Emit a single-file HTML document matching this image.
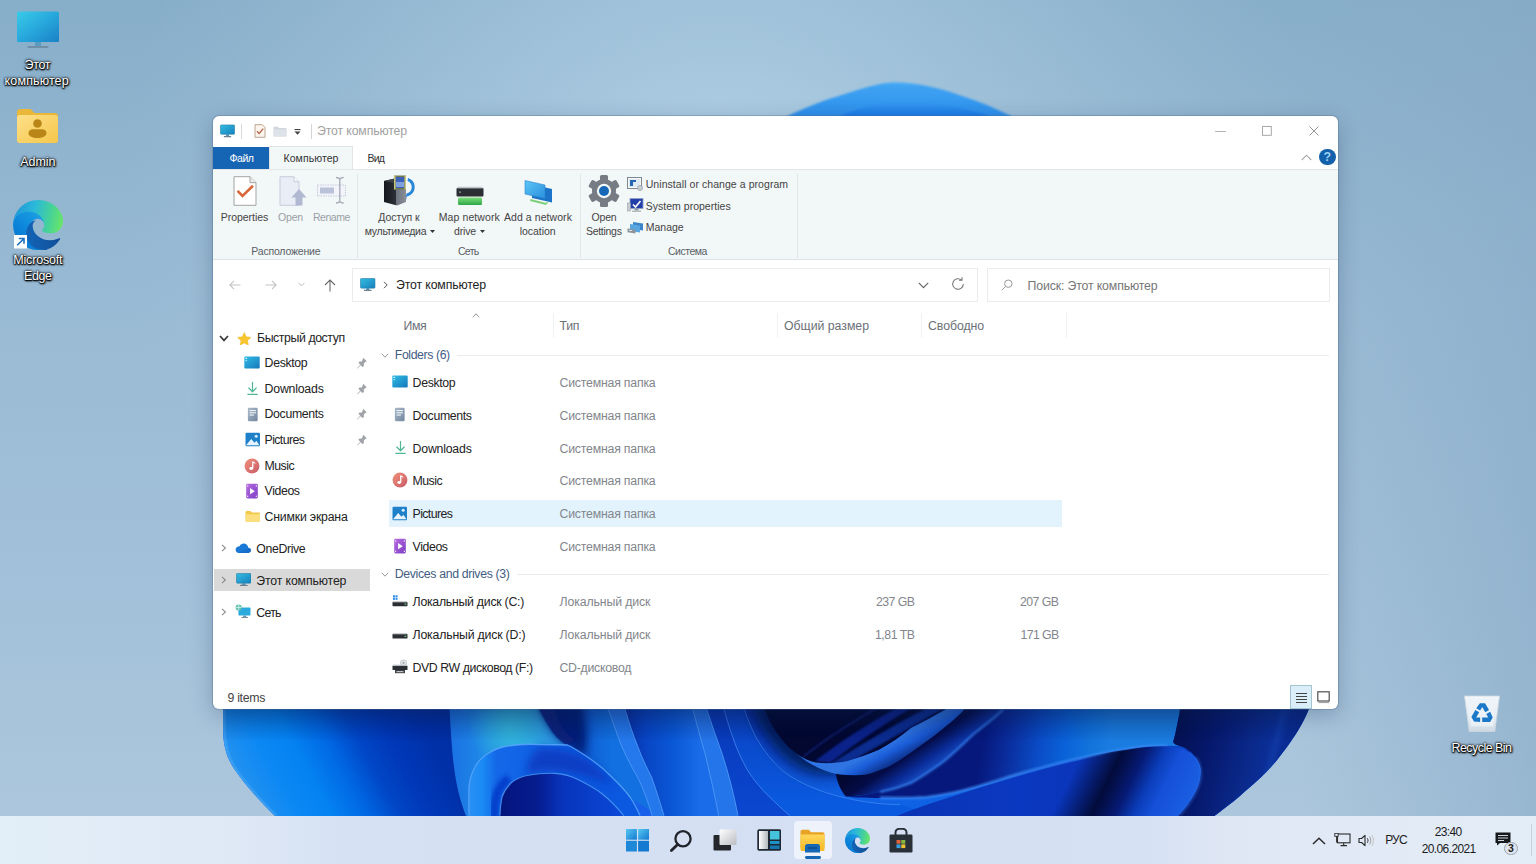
<!DOCTYPE html>
<html lang="ru">
<head>
<meta charset="utf-8">
<title>Этот компьютер</title>
<style>
*{box-sizing:border-box;margin:0;padding:0}
html,body{width:1536px;height:864px;overflow:hidden}
body{position:relative;font-family:"Liberation Sans",sans-serif;font-size:12px;color:#222;background:#9bbad3}
.abs{position:absolute}
#wall{position:absolute;left:0;top:0;width:1536px;height:864px}
/* desktop icons */
.dlabel{position:absolute;color:#fff;font-size:12.5px;line-height:17px;text-align:center;white-space:nowrap;
 text-shadow:0 0 2px #000,0 0 3px #000,1px 1px 2px #000,0 1px 1px rgba(0,0,0,.9)}
/* window */
#win{position:absolute;left:213px;top:116.200px;width:1124.500px;height:593px;background:#fff;border-radius:6px;overflow:hidden;
 box-shadow:0 0 0 1px rgba(80,110,140,.35),0 6px 22px rgba(20,40,80,.28)}
#win .t{position:absolute;white-space:nowrap;line-height:16px}
#ribbon{position:absolute;left:-1px;top:52px;width:1126px;height:91px;background:#f2f7f8;border-top:1px solid #e3e6e9;border-bottom:1px solid #e0e3e6}
.rl{position:absolute;font-size:10.5px;color:#444;white-space:nowrap;line-height:14px;text-align:center}
.rl.dis{color:#9a9fa5}
.rg{position:absolute;font-size:10.5px;color:#5a5f66;white-space:nowrap;line-height:14px;text-align:center}
.rsep{position:absolute;top:4px;width:1px;height:82px;background:#e4e7ea}
.nav{position:absolute;font-size:12.3px;color:#222;white-space:nowrap;line-height:16px}
.nm{position:absolute;font-size:12.3px;color:#222;white-space:nowrap;line-height:16px}
.ty{position:absolute;font-size:12.3px;color:#82868c;white-space:nowrap;line-height:16px}
.hd{position:absolute;font-size:12.3px;color:#6b7077;white-space:nowrap;line-height:16px}
.grp{position:absolute;font-size:12.3px;color:#435d84;white-space:nowrap;line-height:16px}
.csep{position:absolute;top:196px;width:1px;height:25px;background:#f0f1f2}
.gline{position:absolute;height:1px;background:#e9ebee}
/* taskbar */
#task{position:absolute;left:0;top:816px;width:1536px;height:48px;background:linear-gradient(90deg,#e2eef8 0%,#dfe9f6 15%,#d6e1f3 22%,#d4dff3 50%,#d6e1f3 75%,#dfe7f4 80%,#e3edf7 100%)}
.tray{position:absolute;font-size:12px;color:#1c1c1c;white-space:nowrap;line-height:16px}
</style>
</head>
<body>
<svg id="wall" width="1536" height="864" viewBox="0 0 1536 864">
<defs>
<linearGradient id="bg1" x1="0" y1="0" x2="0" y2="1"><stop offset="0" stop-color="#87aec9"/><stop offset="0.35" stop-color="#99bad4"/><stop offset="0.7" stop-color="#a3c1d9"/><stop offset="1" stop-color="#aec8dd"/></linearGradient>
<radialGradient id="bg2" cx="720" cy="200" r="600" gradientUnits="userSpaceOnUse"><stop offset="0" stop-color="#b6d6e8" stop-opacity="0.85"/><stop offset="0.6" stop-color="#a9c8e0" stop-opacity="0.45"/><stop offset="1" stop-color="#a0c0da" stop-opacity="0"/></radialGradient>
<linearGradient id="bgR" x1="1300" y1="0" x2="1536" y2="0" gradientUnits="userSpaceOnUse"><stop offset="0" stop-color="#86a9c6" stop-opacity="0"/><stop offset="1" stop-color="#86a9c6" stop-opacity=".55"/></linearGradient>
<linearGradient id="p1" x1="223" y1="790" x2="460" y2="660" gradientUnits="userSpaceOnUse"><stop offset="0" stop-color="#2a96e8"/><stop offset="0.09" stop-color="#2090f0"/><stop offset="0.2" stop-color="#0c88f4"/><stop offset="0.31" stop-color="#0482f2"/><stop offset="0.43" stop-color="#0066e2"/><stop offset="0.53" stop-color="#0046c6"/><stop offset="0.63" stop-color="#0038b8"/><stop offset="0.76" stop-color="#0030a8"/><stop offset="1" stop-color="#002c9c"/></linearGradient>
<radialGradient id="p2h" cx="510" cy="726" r="42" gradientUnits="userSpaceOnUse"><stop offset="0" stop-color="#34b8dc" stop-opacity="0.85"/><stop offset="1" stop-color="#34b8dc" stop-opacity="0"/></radialGradient>
<linearGradient id="cband" x1="469" y1="0" x2="640" y2="0" gradientUnits="userSpaceOnUse"><stop offset="0" stop-color="#2a90f4"/><stop offset="0.08" stop-color="#1a8af4"/><stop offset="0.16" stop-color="#1468e8"/><stop offset="0.45" stop-color="#1060e4"/><stop offset="0.7" stop-color="#0c56de"/><stop offset="1" stop-color="#0a5ae0"/></linearGradient>
<linearGradient id="cin" x1="500" y1="0" x2="625" y2="0" gradientUnits="userSpaceOnUse"><stop offset="0" stop-color="#04147c"/><stop offset="0.3" stop-color="#061c90"/><stop offset="0.5" stop-color="#0834bc"/><stop offset="1" stop-color="#0a4ad8"/></linearGradient>
<linearGradient id="m23" x1="625" y1="0" x2="700" y2="0" gradientUnits="userSpaceOnUse"><stop offset="0" stop-color="#0830a8"/><stop offset="0.3" stop-color="#0846c6"/><stop offset="0.65" stop-color="#0a58d6"/><stop offset="1" stop-color="#1a6ce8"/></linearGradient>
<linearGradient id="pB" x1="905" y1="738" x2="935" y2="782" gradientUnits="userSpaceOnUse"><stop offset="0" stop-color="#020830"/><stop offset=".3" stop-color="#040c48"/><stop offset=".58" stop-color="#0a2c98"/><stop offset=".84" stop-color="#1a54cc"/><stop offset="1" stop-color="#3a7ce4"/></linearGradient>
<linearGradient id="pC" x1="985" y1="725" x2="1110" y2="745" gradientUnits="userSpaceOnUse"><stop offset="0" stop-color="#06187c"/><stop offset="0.2" stop-color="#0a2c9c"/><stop offset="0.45" stop-color="#0a4cc6"/><stop offset="0.65" stop-color="#0a62d8"/><stop offset="0.85" stop-color="#1274dc"/><stop offset="1" stop-color="#1a7ce0"/></linearGradient>
<linearGradient id="pD" x1="900" y1="0" x2="1160" y2="0" gradientUnits="userSpaceOnUse"><stop offset="0" stop-color="#0a34b4"/><stop offset="0.45" stop-color="#0a38c0"/><stop offset="0.8" stop-color="#0a34b8"/><stop offset="1" stop-color="#0a2ca4"/></linearGradient>
<linearGradient id="lip" x1="1085" y1="748" x2="1190" y2="800" gradientUnits="userSpaceOnUse"><stop offset="0" stop-color="#020830" stop-opacity="0"/><stop offset="0.3" stop-color="#020830" stop-opacity="0.92"/><stop offset="0.48" stop-color="#061a74"/><stop offset="0.62" stop-color="#0a3cb8"/><stop offset="0.75" stop-color="#1550d8"/><stop offset="1" stop-color="#1a5ee2"/></linearGradient>
<linearGradient id="pR" x1="1176" y1="720" x2="1300" y2="752" gradientUnits="userSpaceOnUse"><stop offset="0" stop-color="#041050"/><stop offset="0.3" stop-color="#06186c"/><stop offset="0.6" stop-color="#0a2888"/><stop offset="0.75" stop-color="#0a2e96"/><stop offset="0.8" stop-color="#1038a2"/><stop offset="0.86" stop-color="#0a2c94"/><stop offset="1" stop-color="#0a2a8c"/></linearGradient>
<linearGradient id="bump" x1="0" y1="82" x2="0" y2="120" gradientUnits="userSpaceOnUse"><stop offset="0" stop-color="#52aef6"/><stop offset="0.12" stop-color="#3fa2f2"/><stop offset="0.5" stop-color="#369af0"/><stop offset="1" stop-color="#2a8ae8"/></linearGradient>
<linearGradient id="bump2" x1="0" y1="100" x2="0" y2="120" gradientUnits="userSpaceOnUse"><stop offset="0" stop-color="#3a9ef2"/><stop offset="1" stop-color="#1270e4"/></linearGradient>
<filter id="b1" x="-20%" y="-20%" width="140%" height="140%"><feGaussianBlur stdDeviation=".8"/></filter>
<filter id="b2" x="-20%" y="-20%" width="140%" height="140%"><feGaussianBlur stdDeviation="2"/></filter>
<filter id="b4" x="-30%" y="-30%" width="160%" height="160%"><feGaussianBlur stdDeviation="4"/></filter>
<filter id="b7" x="-40%" y="-40%" width="180%" height="180%"><feGaussianBlur stdDeviation="7"/></filter>
<clipPath id="bloomclip"><path d="M223 600 L223 728 C223 748 228 760 235 770 C242 780 248 787 254 794 C262 803 268 809 275 816 L300 840 L1185 840 L1215 815.600 C1228 806 1238 798 1246 790.600 C1260 779 1270 769 1277.500 759.400 C1286 749 1292 740 1297.800 731 C1302 724 1306 716 1308.750 709.400 L1330 600 Z"/></clipPath>
<linearGradient id="p2g" x1="449" y1="0" x2="548" y2="0" gradientUnits="userSpaceOnUse"><stop offset="0" stop-color="#1a70e4"/><stop offset=".3" stop-color="#1e86e6"/><stop offset=".62" stop-color="#2aa6de"/><stop offset="1" stop-color="#2a96e2"/></linearGradient>
<linearGradient id="mid1" x1="560" y1="0" x2="612" y2="0" gradientUnits="userSpaceOnUse"><stop offset="0" stop-color="#0a4cc6"/><stop offset="1" stop-color="#1270e0"/></linearGradient>
<linearGradient id="v5" x1="0" y1="709" x2="0" y2="805" gradientUnits="userSpaceOnUse"><stop offset="0" stop-color="#0a40c0"/><stop offset="1" stop-color="#0a5ae0"/></linearGradient>
<linearGradient id="v6" x1="0" y1="709" x2="0" y2="800" gradientUnits="userSpaceOnUse"><stop offset="0" stop-color="#0832aa"/><stop offset=".5" stop-color="#0a48cc"/><stop offset="1" stop-color="#1062e4"/></linearGradient>
<linearGradient id="v45" x1="0" y1="709" x2="0" y2="805" gradientUnits="userSpaceOnUse"><stop offset="0" stop-color="#0838b8"/><stop offset="1" stop-color="#0a46ce"/></linearGradient>
<linearGradient id="winsh" x1="0" y1="708" x2="0" y2="742" gradientUnits="userSpaceOnUse"><stop offset="0" stop-color="#001040" stop-opacity=".3"/><stop offset="1" stop-color="#001040" stop-opacity="0"/></linearGradient>
<linearGradient id="pA" x1="880" y1="748" x2="892" y2="770" gradientUnits="userSpaceOnUse"><stop offset="0" stop-color="#2e74e2"/><stop offset=".35" stop-color="#1a5cd8"/><stop offset="1" stop-color="#08206c"/></linearGradient>
</defs>
<rect width="1536" height="864" fill="url(#bg1)"/>
<rect width="1536" height="864" fill="url(#bg2)"/>
<rect width="1536" height="864" fill="url(#bgR)"/>
<!-- top bump -->
<g filter="url(#b1)">
<path d="M784 119 L787.800 116 C795 112.500 803 109 811 105.800 C821 101.500 832 98 842.500 94.800 C853 91.500 863 88 873.750 85.500 C880 84 886 82.500 892.500 82.300 C902 82 911 83 920.600 84.700 C931 86.500 941 89 951.900 92.500 C962 96 973 99.500 983 103.400 C993 107.500 1002 111.500 1011 116 L1015 119Z" fill="url(#bump)"/>
<path d="M834 119 C848 112 861 108 873.750 105 C884 102.700 895 101.700 905 101.900 C921 102.200 937 104 951.900 106.600 C966 109.200 980 112.500 996 119Z" fill="url(#bump2)"/>
</g>
<!-- bloom bottom -->
<g clip-path="url(#bloomclip)">
<rect x="200" y="600" width="1150" height="250" fill="#1860ea"/>
<!-- left petal -->
<rect x="200" y="600" width="272" height="250" fill="url(#p1)"/>
<!-- second petal -->
<path d="M449.500 600 L449.500 709 C451 735 452 750 453.400 762 C456 785 460 800 466 816 L470 840 L600 840 L600 600 Z" fill="url(#p2g)"/>
<rect x="440" y="660" width="140" height="140" fill="url(#p2h)"/>
<!-- medium region right of second petal -->
<path d="M539 600 L539 709 C544 718 548 725 552 731 C557 738 562 742 567.500 745 L600 780 L700 840 L800 840 L800 600 Z" fill="url(#mid1)"/>
<path d="M541 600 L541 709 C546 720 551 729 558 737 C565 744 574 750 584 756 C590 745 586 722 582 700 L582 600Z" fill="#061a74" filter="url(#b4)" opacity=".95"/>
<path d="M539 700 L539 709 C544 718 548 725 552 731 C557 738 562 742 567.500 745 L575 740 C562 730 555 715 552 700Z" fill="#08207c" filter="url(#b1)"/>
<!-- curl outer band -->
<path d="M469 840 L469 815.600 C468.500 800 469 795 469 786 C470 778 472 772 475 767 C479 760 483 756 489 753 C495 749 501 747 508 746 C520 744 530 744 539 744.500 C550 744.600 560 744.700 567.500 745 C574 748 580 752 586 756 C595 762 603 768 609.700 775 C617 782 624 789 630 797 C634 803 637 809 640 815.600 L650 840 Z" fill="url(#cband)"/>
<path d="M540 748 C560 748 575 752 590 762 C600 770 608 778 614 786 C600 780 585 774 565 772 C550 770 535 772 525 775 C528 762 532 752 540 748Z" fill="#0830b8" filter="url(#b4)" opacity=".7"/>
<path d="M469 815.600 C468.500 800 469 795 469 786 C470 778 472 772 475 767 C479 760 483 756 489 753 C495 749 501 747 508 746 C520 744 530 744 539 744.500 C550 744.600 560 744.700 567.500 745 C574 748 580 752 586 756 C595 762 603 768 609.700 775 C617 782 624 789 630 797 C634 803 637 809 640 815.600" stroke="#58a6fa" stroke-width="1.300" fill="none" opacity=".85"/>
<path d="M494 840 L494 815 C494 806 495 800 497 794 C500 787 504 782 509 778" stroke="#0036c4" stroke-width="9" fill="none" filter="url(#b2)" opacity=".8"/>
<!-- curl inner -->
<path d="M500 840 L500 815.600 C500 808 501 802 502 797 C504 791 507 787 511 783 C517 778 523 776 530 775 C538 773.500 547 773 555 773.400 C563 774 571 776 578.400 779.700 C587 784 595 788 602 793.700 C610 800 617 807 623.700 815.600 L640 840 Z" fill="url(#cin)"/>
<path d="M500 815.600 C500 808 501 802 502 797 C504 791 507 787 511 783 C517 778 523 776 530 775 C538 773.500 547 773 555 773.400 C563 774 571 776 578.400 779.700 C587 784 595 788 602 793.700 C610 800 617 807 623.700 815.600" stroke="#4f9ef8" stroke-width="1.200" fill="none" opacity=".8"/>
<!-- thin petals -->
<path d="M625 600 L625 709 C629 722 633 735 638 747 C642 758 647 768 652 778 C656 790 660 802 664 815.600 L668 840 L760 840 L700 600Z" fill="url(#m23)"/>
<path d="M608 600 L608 709 C613 722 617 735 622 747 C627 758 632 768 638 778 C644 790 648 802 652 815.600 L655 840 L668 840 L664 815.600 C660 802 656 790 652 778 C647 768 642 758 638 747 C633 735 629 722 625 709 L625 600Z" fill="#2478ec"/>
<path d="M608 709 C613 722 617 735 622 747 C627 758 632 768 638 778 C644 790 648 802 652 815.600M625 709 C629 722 633 735 638 747 C642 758 647 768 652 778 C656 790 660 802 664 815.600" stroke="#5aa4fa" stroke-width="1" fill="none" opacity=".7"/>
<!-- band 3-4 and 4-5 -->
<path d="M706.900 600 L706.900 709.400 C712 725 717 740 722.500 754.700 C729 775 734 795 738 815.600 L742 840 L830 840 L760 600Z" fill="url(#v45)"/>
<path d="M692.800 600 L692.800 709.400 C697 725 701 740 705.300 754.700 C710 775 715 795 718.600 815.600 L722 840 L742 840 L738 815.600 C734 795 729 775 722.500 754.700 C717 740 712 725 706.900 709.400 L706.900 600Z" fill="#2474ea"/>
<path d="M692.800 709.400 C697 725 701 740 705.300 754.700 C710 775 715 795 718.600 815.600M706.900 709.400 C712 725 717 740 722.500 754.700 C729 775 734 795 738 815.600" stroke="#5aa4fa" stroke-width="1" fill="none" opacity=".7"/>
<!-- right of line 5 -->
<path d="M724 600 L724 709.400 C727 720 730 730 733.400 739 C737 750 742 760 747.500 770.300 C754 780 761 789 769.400 796.900 C776 803 782 809 789.700 815.600 L820 840 L1000 840 L1000 600Z" fill="url(#v5)"/>
<path d="M724 709.400 C727 720 730 730 733.400 739 C737 750 742 760 747.500 770.300 C754 780 761 789 769.400 796.900 C776 803 782 809 789.700 815.600" stroke="#4a92f6" stroke-width="1" fill="none" opacity=".7"/>
<!-- right of line 6 -->
<path d="M744.400 600 L744.400 709.400 C748 720 752 730 756.900 739 C764 751 772 761 781.900 770.300 C792 778 803 784 816 789 C828 794 841 797 855 800 C870 803 885 804.500 900 804.700 L960 820 L1000 840 L1250 840 L1250 600Z" fill="url(#v6)"/>
<path d="M744.400 709.400 C748 720 752 730 756.900 739 C764 751 772 761 781.900 770.300 C792 778 803 784 816 789 C828 794 841 797 855 800 C870 803 885 804.500 900 804.700" stroke="#4a92f6" stroke-width="1" fill="none" opacity=".6"/>
<path d="M764.700 700 L764.700 709.400 C768 717 771 724 775.600 731 C781 739 787 746 794 751.600 C801 757 808 761 816 762.500 C826 764 837 763 847.500 761" stroke="#020830" stroke-width="22" fill="none" filter="url(#b7)" opacity=".75"/>
<!-- cavity -->
<path d="M764.700 600 L764.700 709.400 C768 717 771 724 775.600 731 C781 739 787 746 794 751.600 C801 757 808 761 816 762.500 C826 764 837 763 847.500 761 C858 758 869 754 878.800 750 C890 744 900 737 911 728 C923 722 934 716 945.600 709.400 L960 600Z" fill="#020830"/>
<g opacity=".9" filter="url(#b1)">
<path d="M803 757 C830 735 860 718 890 700" stroke="#1a2a86" stroke-width="1.500" fill="none"/>
<path d="M815 761 C845 738 880 716 912 700 L925 700 C890 720 860 740 830 763Z" fill="#0d2896"/>
<path d="M832 763 C865 742 905 718 940 702 L958 700 C920 722 880 745 850 762Z" fill="#11319c"/>
</g>
<!-- petal B (shadowed, under cavity rim) -->
<path d="M835 768 C846 768 858 765 869 761 C880 757 890 751 900 744 C915 735 930 725 945.600 715 L952 700 L1003.400 700 L1003.400 709.400 C994 718 984 726 973.750 734 C963 744 953 754 942.500 762.500 C932 770 922 777 911 783 C901 787 891 790 880 792 C868 794.500 856 796 846 796.500 C840 790 836 780 835 768Z" fill="url(#pB)"/>
<!-- petal A rim -->
<path d="M796 753.500 C802 758 809 761.500 816 762.500 C826 764 837 763 847.500 761 C858 758 869 754 878.800 750 C890 744 900 737 911 728 C923 722 934 716 945.600 709.400 L950 700 L972 700 L962 712 C956 718 950 723 945 727 C937 734 928 740 920 746 C913 751 906 756 900 760 C893 764.500 887 768 880 770 C873 773 866 775 860 775 C850 775.500 840 775 832 773 C818 769 806 762 796 753.500Z" fill="url(#pA)"/>
<!-- broad surface C -->
<path d="M1003.400 600 L1003.400 709.400 C994 718 984 726 973.750 734 C963 744 953 754 942.500 762.500 C932 770 922 777 911 783 C901 787 891 790 880 792 C868 794.500 856 796 846 796.500 C858 797.800 869 798 880 797.900 C896 798 912 798 927 797 C943 795 958 792 973.750 787.500 C990 783 1005 778 1020.600 773.400 C1036 769 1052 765 1067.500 761 C1085 757 1103 753 1120 750 C1136 747 1152 745.500 1168 745.700 L1180 746 C1176 745 1174 744 1173 742 C1175 736 1176 730 1177.500 723 C1178.500 718 1179.500 714 1180 709 L1180 600Z" fill="url(#pC)"/>
<path d="M880 797.700 C896 798 912 798 927 797 C943 795 958 792 973.750 787.500 C990 783 1005 778 1020.600 773.400 C1036 769 1052 765 1067.500 761 C1085 757 1103 753 1120 750 C1136 747 1152 745.500 1168 745.700" stroke="#3f8ef6" stroke-width="2.200" fill="none" opacity=".9" filter="url(#b1)"/>
<path d="M1003.400 709.400 C994 718 984 726 973.750 734 C963 744 953 754 942.500 762.500 C932 770 922 777 911 783 C901 787 891 790 880 792" stroke="#3a8af4" stroke-width="2" fill="none" opacity=".8" filter="url(#b1)"/>
<!-- underside D -->
<path d="M892 818 C905 812 920 807 935 802 C948 798 961 793.500 974 789.500 C990 784.500 1005 780 1020.600 775.400 C1036 771 1052 767 1067.500 763 C1085 759 1103 755 1120 752 C1136 749 1152 747.500 1168 747.700 L1190 750 L1185 840 L880 840Z" fill="url(#pD)"/>
<!-- lip of C -->
<path d="M1040 769 C1070 761 1100 753 1129 749.400 C1141 747.500 1153 746.300 1165 746.300 C1172 746.500 1178 747 1183.750 749 C1189 751.500 1193 754 1196 758 C1199 762 1200.500 766 1201 770 C1201 776 1200 782 1197.800 787.500 C1195 794 1191 800 1187 806 C1184 810 1181 813 1179 815.600 L1165 840 L1000 840Z" fill="url(#lip)"/>
<!-- far right petal -->
<path d="M1180 600 L1180 709 C1179.500 714 1178.500 718 1177.500 723 C1176 730 1175 736 1173 742 C1174 744 1176 745 1180 746 C1186 748 1192 752 1196 757.800 C1199 762 1200.500 766 1201 770 C1201 776 1200 782 1197.800 787.500 C1195 794 1191 800 1187 806 C1184 810 1181 813 1179 815.600 L1165 840 L1340 840 L1340 600Z" fill="url(#pR)"/>
<path d="M1196 757 C1200 763 1202 770 1201 778 C1199 790 1192 802 1180 815.600" stroke="#3a7cf0" stroke-width="1.500" fill="none" opacity=".6" filter="url(#b1)"/>
<path d="M224 700 L224 728 C224 748 229 760 236 770 C243 780 249 787 255 794 C263 803 269 809 276 816" stroke="#62b4f4" stroke-width="2" fill="none" opacity=".7" filter="url(#b1)"/>
<rect x="200" y="708" width="1150" height="40" fill="url(#winsh)"/>
</g>
</svg>

<svg class="abs" style="left:15.5px;top:11.0px;" width="44" height="38" viewBox="0 0 44 38"><defs><linearGradient id="dm" x1="0" y1="0" x2="1" y2="1"><stop offset="0" stop-color="#3acbe8"/><stop offset=".5" stop-color="#27a8dc"/><stop offset="1" stop-color="#1a80c6"/></linearGradient></defs>
<rect x="1" y=".5" width="42" height="30.500" rx="1.500" fill="url(#dm)"/><rect x="19" y="31" width="6" height="4" fill="#5a9cc0"/><rect x="11.500" y="35" width="21" height="2" rx="1" fill="#6f8fa6"/></svg>
<div class="dlabel" style="left:-22.7px;width:120px;top:56.8px;letter-spacing:-0.396px;">Этот</div>
<div class="dlabel" style="left:-23.3px;width:120px;top:72.5px;letter-spacing:0.130px;">компьютер</div>
<svg class="abs" style="left:16.0px;top:108.0px;" width="43" height="36" viewBox="0 0 43 36"><defs><linearGradient id="df" x1="0" y1="0" x2="1" y2="1"><stop offset="0" stop-color="#fde08a"/><stop offset="1" stop-color="#f5c64a"/></linearGradient></defs>
<path d="M1 4c0-1.700 1.300-3 3-3h10.500l4 4H39c1.700 0 3 1.300 3 3v24c0 1.700-1.300 3-3 3H4c-1.700 0-3-1.300-3-3z" fill="#e9b73a"/><path d="M1 10c0-1.700 1.300-3 3-3h35c1.700 0 3 1.300 3 3v22c0 1.700-1.300 3-3 3H4c-1.700 0-3-1.300-3-3z" fill="url(#df)"/><circle cx="21.500" cy="15.500" r="4.300" fill="#bb8618"/><path d="M12.500 25c0-2.500 2-3.800 4.500-3.800h9c2.500 0 4.500 1.300 4.500 3.800 0 3.300-4 5-9 5s-9-1.700-9-5z" fill="#bb8618"/></svg>
<div class="dlabel" style="left:-22.2px;width:120px;top:153.8px;letter-spacing:-0.087px;">Admin</div>
<svg class="abs" style="left:12.5px;top:200.3px;" width="50" height="50" viewBox="0 0 256 256"><defs>
<linearGradient id="ea_d" x1="63.300" y1="182" x2="241.700" y2="182" gradientUnits="userSpaceOnUse"><stop offset="0" stop-color="#1265b8"/><stop offset="1" stop-color="#114f98"/></linearGradient>
<linearGradient id="ec_d" x1="157.300" y1="104.600" x2="46" y2="225.900" gradientUnits="userSpaceOnUse"><stop offset="0" stop-color="#1b9de2"/><stop offset=".2" stop-color="#1595df"/><stop offset=".7" stop-color="#0a82d8"/><stop offset="1" stop-color="#077ad4"/></linearGradient>
<linearGradient id="ee_d" x1="0" y1="60" x2="256" y2="110" gradientUnits="userSpaceOnUse"><stop offset="0" stop-color="#1e93d8"/><stop offset=".4" stop-color="#2bb9da"/><stop offset=".72" stop-color="#45d19a"/><stop offset="1" stop-color="#6ae665"/></linearGradient>
</defs>
<path fill="url(#ea_d)" d="M235.700 195.500a93.700 93.700 0 0 1-10.600 4.700 101.900 101.900 0 0 1-35.900 6.400c-47.300 0-88.500-32.500-88.500-74.300a31.500 31.500 0 0 1 16.400-27.300c-42.800 1.800-53.800 46.400-53.800 72.500 0 73.900 68.100 81.400 82.800 81.400 7.900 0 19.800-2.300 27-4.600l1.300-.4a128.300 128.300 0 0 0 66.600-52.800 4 4 0 0 0-5.300-5.600z"/>
<path fill="url(#ec_d)" d="M105.700 241.400a79.200 79.200 0 0 1-22.700-21.300 80.700 80.700 0 0 1 29.500-120c3.200-1.500 8.500-4.100 15.600-4a32.400 32.400 0 0 1 25.700 13 31.900 31.900 0 0 1 6.300 18.700c0-.2 24.500-79.600-80-79.600-43.900 0-80 41.600-80 78.200a130.200 130.200 0 0 0 12.100 56 128 128 0 0 0 156.400 67.100 75.500 75.500 0 0 1-62.800-8z"/>
<path fill="url(#ee_d)" d="M152.300 148.900c-.8 1-3.300 2.500-3.300 5.600 0 2.600 1.700 5.200 4.800 7.300 14.300 10 41.400 8.600 41.500 8.600a59.600 59.600 0 0 0 30.300-8.300 61.400 61.400 0 0 0 30.400-52.900c.3-22.400-8-37.300-11.300-43.900C223.500 23.900 178.100 0 128 0A128 128 0 0 0 0 126.200c.5-36.500 36.800-66 80-66 3.500 0 23.500.3 42 10 16.300 8.600 24.900 19 30.800 29.200 6.200 10.700 7.300 24.100 7.300 29.500s-2.700 13.300-7.800 20z"/></svg>
<svg class="abs" style="left:13.8px;top:235.2px;" width="13.5" height="13.5" viewBox="0 0 13.5 13.5"><rect width="13.500" height="13.500" fill="#fff"/><path d="M3.200 10.300L9.800 3.700M4.800 3.500h5.200v5.200" stroke="#1c6fc0" stroke-width="1.600" fill="none"/></svg>
<div class="dlabel" style="left:-22.2px;width:120px;top:251.5px;letter-spacing:-0.189px;">Microsoft</div>
<div class="dlabel" style="left:-22.2px;width:120px;top:268.1px;letter-spacing:-0.451px;">Edge</div>
<svg class="abs" style="left:1462.5px;top:694.5px;" width="38" height="38" viewBox="0 0 38 38"><defs><linearGradient id="rb" x1="0" y1="0" x2="0" y2="1"><stop offset="0" stop-color="#f3f7fa"/><stop offset=".7" stop-color="#e2eaf1"/><stop offset="1" stop-color="#ccd8e3"/></linearGradient></defs>
<path d="M1.500 1h35l-4.700 35.500H6.200z" fill="url(#rb)" stroke="#cdd8e2" stroke-width=".8"/><path d="M4.200 3.200h29.600l-3.800 28H8z" fill="#edf3f8" opacity=".75"/>
<g transform="translate(19.200 19) scale(1.140)" fill="#1b78c8"><path d="M-2-9.500l4.500 0 3.500 6-3.300 2-2.700-4.600-1.800 3-3.400-2z"/><path d="M-2-9.500l4.500 0 3.500 6-3.300 2-2.700-4.600-1.800 3-3.400-2z" transform="rotate(120)"/><path d="M-2-9.500l4.500 0 3.500 6-3.300 2-2.700-4.600-1.800 3-3.400-2z" transform="rotate(240)"/></g></svg>
<div class="dlabel" style="left:1421.5px;width:120px;top:739.7px;letter-spacing:-0.545px;">Recycle Bin</div>

<div id="win"><div style="position:absolute;left:1px;top:.8px;width:1124px;height:591px">
<svg class="abs" style="left:6.3px;top:7.0px;" width="15" height="14" viewBox="0 0 16 14"><defs><linearGradient id="gmon_1" x1="0" y1="0" x2="1" y2="1"><stop offset="0" stop-color="#34bde0"/><stop offset="1" stop-color="#1680be"/></linearGradient></defs>
<rect x=".5" y=".5" width="15" height="10" rx=".8" fill="url(#gmon_1)" stroke="#1c7aa6" stroke-width=".6"/><rect x="6.5" y="10.5" width="3" height="2" fill="#4b8fb5"/><rect x="4" y="12.3" width="8" height="1.3" rx=".5" fill="#6b7f8c"/></svg>
<div class="abs" style="left:27px;top:7px;width:1px;height:15px;background:#d9d9d9"></div>
<svg class="abs" style="left:39.6px;top:7.5px;" width="12" height="14" viewBox="0 0 12 14"><path d="M1 .7h7.300l2.700 2.700V13.300H1z" fill="#fdf5ee" stroke="#b39c88" stroke-width=".9"/><path d="M3 7.200l2.200 2.300L9.200 4.600" stroke="#b4684a" stroke-width="1.300" fill="none"/></svg>
<svg class="abs" style="left:59.0px;top:9.5px;" width="14" height="11" viewBox="0 0 14 11"><path d="M.5 1.700c0-.6.4-1 1-1h3.400l1.300 1.300h6.300c.6 0 1 .4 1 1v6.500c0 .6-.4 1-1 1h-11c-.6 0-1-.4-1-1z" fill="#cfd6dd"/><path d="M.5 3.600h13v5.900c0 .6-.4 1-1 1h-11c-.6 0-1-.4-1-1z" fill="#dde3e9"/></svg>
<svg class="abs" style="left:79.5px;top:12.5px;" width="7" height="6" viewBox="0 0 7 6"><rect x=".5" y="0" width="6" height="1.100" fill="#444"/><path d="M.5 2.500h6l-3 3.200z" fill="#444"/></svg>
<div class="abs" style="left:96.500px;top:7px;width:1px;height:15px;background:#d4d4d4"></div>
<div class="t" style="left:103.0px;top:6.0px;font-size:12.300px;color:#a2a2a2;letter-spacing:-0.140px;">Этот компьютер</div>
<svg class="abs" style="left:1001.0px;top:13.0px;" width="12" height="3" viewBox="0 0 12 3"><rect x="0" y="1" width="11" height="1" fill="#b5b5b5"/></svg>
<svg class="abs" style="left:1048.3px;top:9.2px;" width="10" height="10" viewBox="0 0 10 10"><rect x=".5" y=".5" width="8.800" height="8.800" fill="none" stroke="#a8a8a8" stroke-width="1"/></svg>
<svg class="abs" style="left:1095.3px;top:9.2px;" width="10" height="10" viewBox="0 0 10 10"><path d="M.5.500l9 9M9.500.500l-9 9" stroke="#979797" stroke-width="1"/></svg>
<div class="abs" style="left:-1px;top:30px;width:56px;height:22px;background:#1565b4"></div>
<div class="t" style="left:-72.5px;width:200px;text-align:center;top:33.0px;font-size:10.500px;color:#fff;letter-spacing:-0.457px;">Файл</div>
<div class="abs" style="left:55px;top:29.500px;width:84px;height:23.500px;background:#f2f7f8;border:1px solid #e2e5e8;border-bottom:none"></div>
<div class="t" style="left:-3.0px;width:200px;text-align:center;top:33.0px;font-size:10.500px;color:#333;letter-spacing:0.071px;">Компьютер</div>
<div class="t" style="left:61.8px;width:200px;text-align:center;top:33.0px;font-size:10.500px;color:#333;letter-spacing:-0.800px;">Вид</div>
<svg class="abs" style="left:1086.5px;top:37.5px;" width="11" height="7" viewBox="0 0 11 7"><path d="M.8 6l4.700-4.800L10.200 6" stroke="#a9a9a9" stroke-width="1.100" fill="none"/></svg>
<div class="abs" style="left:1105px;top:32px;width:16.500px;height:16.500px;border-radius:50%;background:#1460aa"></div>
<div class="t" style="left:1013.3px;width:200px;text-align:center;top:32.5px;font-size:12.500px;font-weight:bold;color:#9ad2f7;">?</div>
<div id="ribbon">
</div>
<svg class="abs" style="left:18.5px;top:59.5px;" width="24" height="30" viewBox="0 0 24 30"><path d="M1 .7h16l6 6V29.300H1z" fill="#fff" stroke="#a3a3a3" stroke-width="1"/><path d="M17 .7v6h6" fill="#ececec" stroke="#a3a3a3" stroke-width="1"/><path d="M4.500 14.800l5 5.200L20 9.800" stroke="#d9673a" stroke-width="2.600" fill="none"/></svg>
<svg class="abs" style="left:65.0px;top:59.5px;opacity:.9;" width="28" height="30" viewBox="0 0 28 30"><path d="M1 .7h14l5 5V29.300H1z" fill="#e9ecf6" stroke="#c3c9dc" stroke-width="1"/><path d="M15 .7v5h5" fill="#f6f7fb" stroke="#c3c9dc" stroke-width="1"/><path d="M20 13l7.500 8.500h-4V29.500h-7v-8h-4z" fill="#a9b3cd"/></svg>
<svg class="abs" style="left:103.0px;top:59.5px;" width="30" height="28" viewBox="0 0 30 28"><rect x=".5" y="9" width="28" height="11" fill="#f2f4fa" stroke="#c5cbdc" stroke-width="1" stroke-dasharray="1.500 1"/><rect x="3" y="11.500" width="14" height="6" fill="#b9c2d8"/><path d="M19 1.500c2 0 3 .5 3.800 1.500C23.600 2 24.600 1.500 26.600 1.500M19 27c2 0 3-.5 3.800-1.500.8 1 1.800 1.500 3.800 1.500M22.800 3v22.500" stroke="#a5a9b5" stroke-width="1.300" fill="none"/></svg>
<svg class="abs" style="left:169.0px;top:58.5px;" width="33" height="31" viewBox="0 0 33 31"><defs><linearGradient id="gtw" x1="0" y1="0" x2="1" y2="0"><stop offset="0" stop-color="#15181c"/><stop offset=".55" stop-color="#2c3138"/><stop offset=".56" stop-color="#6d737c"/><stop offset="1" stop-color="#8a9098"/></linearGradient></defs>
<path d="M25 3c5 1.500 7.500 6 6.500 11-.8 4-4 7-8.500 7.500l.5-3c3-.6 5-3 5.200-5.800.3-3-1.200-5.600-4.200-6.700z" fill="#2a86d8"/><path d="M16 22l7 3.500 1-5.500z" fill="#2a86d8"/>
<path d="M1 6l13-3 9 3v21l-9 3.500L1 27z" fill="url(#gtw)"/><path d="M1 6l13-3 9 3-9 2.500z" fill="#3a4048"/>
<rect x="11" y="0.500" width="12" height="14" fill="#6d7a52"/><rect x="12.500" y="2" width="9" height="11" fill="#3c63b8"/><path d="M11 .5h1.500v14H11zM21.500.500H23v14h-1.500z" fill="#c8c47a"/><rect x="13" y="7" width="8" height="5" fill="#7fa0dc"/></svg>
<svg class="abs" style="left:241.5px;top:69.5px;" width="28" height="20" viewBox="0 0 28 20"><defs><linearGradient id="ggr" x1="0" y1="0" x2="0" y2="1"><stop offset="0" stop-color="#7be07a"/><stop offset="1" stop-color="#2fa546"/></linearGradient></defs>
<rect x="2" y="11.500" width="24" height="7.500" rx="1.200" fill="url(#ggr)"/><rect x=".5" y="2" width="27" height="8.500" rx="1" fill="#2b2f33"/><rect x="1.500" y=".8" width="25" height="1.600" fill="#bfc4c9"/><rect x="3" y="5.500" width="2" height="1.200" fill="#9aa0a6"/></svg>
<svg class="abs" style="left:310.0px;top:63.5px;" width="29" height="26" viewBox="0 0 29 26"><defs><linearGradient id="gnl" x1="0" y1="0" x2="1" y2="1"><stop offset="0" stop-color="#5cc6f6"/><stop offset="1" stop-color="#2a90de"/></linearGradient></defs>
<path d="M8 4.500l20 4.500v13.500l-20-4.500z" fill="#1b74c8"/><path d="M6.500 19l15 3.800 3.500-1.500-3 3.700-16-4z" fill="#7fd07a"/><path d="M1 0.500l20 4.500v13.500L1 14z" fill="url(#gnl)" stroke="#2a84d2" stroke-width=".6"/></svg>
<svg class="abs" style="left:373.5px;top:58.0px;" width="32" height="32" viewBox="0 0 32 32"><g transform="translate(16 16)"><g fill="#777c84"><circle r="12"/><rect x="-4" y="-16" width="8" height="8" rx="1.500" transform="rotate(0)"/><rect x="-4" y="-16" width="8" height="8" rx="1.500" transform="rotate(60)"/><rect x="-4" y="-16" width="8" height="8" rx="1.500" transform="rotate(120)"/><rect x="-4" y="-16" width="8" height="8" rx="1.500" transform="rotate(180)"/><rect x="-4" y="-16" width="8" height="8" rx="1.500" transform="rotate(240)"/><rect x="-4" y="-16" width="8" height="8" rx="1.500" transform="rotate(300)"/></g><circle r="7.200" fill="#f2f7f8"/><circle r="5" fill="#1667b7"/></g></svg>
<svg class="abs" style="left:413.0px;top:60.5px;" width="16" height="14" viewBox="0 0 16 14"><rect x=".5" y=".5" width="14" height="11" fill="#f7f9fb" stroke="#7d8790" stroke-width="1"/><rect x="2" y="2" width="11" height="8" fill="#dfe9f3"/><rect x="3" y="3" width="6" height="2" fill="#2467b3"/><rect x="3" y="5" width="3" height="4" fill="#2467b3"/><circle cx="13" cy="11" r="2.500" fill="#c9ced4" stroke="#8c949c" stroke-width=".6"/></svg>
<svg class="abs" style="left:412.5px;top:81.5px;" width="17" height="15" viewBox="0 0 17 15"><rect x="3" y=".5" width="13" height="10" fill="#2340a8" stroke="#8fa0c8" stroke-width=".8"/><path d="M6 6.500l2.500 2.500L13.500 3" stroke="#fff" stroke-width="1.600" fill="none"/><rect x="7.500" y="10.500" width="4" height="2" fill="#8c949c"/><rect x="5" y="12.500" width="9" height="1.500" fill="#b3bac1"/><rect x=".5" y="5" width="3" height="8" fill="#c9ced4" stroke="#8c949c" stroke-width=".5"/></svg>
<svg class="abs" style="left:412.5px;top:104.5px;" width="17" height="13" viewBox="0 0 17 13"><path d="M6 1l10 1.500v7L6 8z" fill="#3a86c8"/><path d="M3 3l10 1.500v7L3 10z" fill="#5aa6e0"/><path d="M0.500 7.500l8 1.200v3.800l-8-1.200z" fill="#8c949c"/><rect x="2" y="9" width="3" height="1" fill="#dfe3e7"/></svg>
<div class="rl" style="left:-69.5px;width:200px;text-align:center;top:93.2px;letter-spacing:-0.036px;">Properties</div>
<div class="rl dis" style="left:-23.5px;width:200px;text-align:center;top:93.2px;letter-spacing:-0.172px;">Open</div>
<div class="rl dis" style="left:17.4px;width:200px;text-align:center;top:93.2px;letter-spacing:-0.451px;">Rename</div>
<div class="rg" style="left:-28.2px;width:200px;text-align:center;top:126.8px;letter-spacing:-0.198px;">Расположение</div>
<div class="rl" style="left:85.0px;width:200px;text-align:center;top:93.2px;letter-spacing:-0.050px;">Доступ к</div>
<div class="rl" style="left:81.5px;width:200px;text-align:center;top:107.0px;letter-spacing:-0.261px;">мультимедиа</div>
<svg class="abs" style="left:215.5px;top:113.0px;" width="5" height="3" viewBox="0 0 5 3"><path d="M0 0h5L2.500 3z" fill="#333"/></svg>
<div class="rl" style="left:155.3px;width:200px;text-align:center;top:93.2px;letter-spacing:0.081px;">Map network</div>
<div class="rl" style="left:151.0px;width:200px;text-align:center;top:107.0px;letter-spacing:-0.153px;">drive</div>
<svg class="abs" style="left:265.5px;top:113.0px;" width="5" height="3" viewBox="0 0 5 3"><path d="M0 0h5L2.500 3z" fill="#333"/></svg>
<div class="rl" style="left:224.0px;width:200px;text-align:center;top:93.2px;letter-spacing:0.067px;">Add a network</div>
<div class="rl" style="left:223.7px;width:200px;text-align:center;top:107.0px;letter-spacing:-0.025px;">location</div>
<div class="rg" style="left:154.3px;width:200px;text-align:center;top:126.8px;letter-spacing:-0.665px;">Сеть</div>
<div class="rl" style="left:290.0px;width:200px;text-align:center;top:93.2px;letter-spacing:-0.172px;">Open</div>
<div class="rl" style="left:289.8px;width:200px;text-align:center;top:107.0px;letter-spacing:-0.282px;">Settings</div>
<div class="rl" style="left:431.7px;top:60.3px;letter-spacing:0.063px;">Uninstall or change a program</div>
<div class="rl" style="left:431.7px;top:81.8px;letter-spacing:0.022px;">System properties</div>
<div class="rl" style="left:431.7px;top:103.3px;letter-spacing:0.008px;">Manage</div>
<div class="rg" style="left:373.5px;width:200px;text-align:center;top:126.8px;letter-spacing:-0.471px;">Система</div>
<div class="abs" style="left:142.5px;top:174px;width:1px;height:84px;background:#e3e6e9;top:57px"></div>
<div class="abs" style="left:366.0px;top:174px;width:1px;height:84px;background:#e3e6e9;top:57px"></div>
<div class="abs" style="left:583.0px;top:174px;width:1px;height:84px;background:#e3e6e9;top:57px"></div>
<svg class="abs" style="left:14.5px;top:163.5px;" width="12" height="10" viewBox="0 0 12 10"><path d="M11.500 5H1M5 .8L.8 5 5 9.200" stroke="#c4c4c4" stroke-width="1.100" fill="none"/></svg>
<svg class="abs" style="left:50.8px;top:163.5px;" width="12" height="10" viewBox="0 0 12 10"><path d="M.5 5H11M7 .8L11.200 5 7 9.200" stroke="#c4c4c4" stroke-width="1.100" fill="none"/></svg>
<svg class="abs" style="left:83.5px;top:165.5px;" width="7" height="5" viewBox="0 0 7 5"><path d="M.5.800L3.500 4 6.500.800" stroke="#bdbdbd" stroke-width="1" fill="none"/></svg>
<svg class="abs" style="left:110.0px;top:162.3px;" width="12" height="13" viewBox="0 0 12 13"><path d="M6 12.500V1M1 6L6 1l5 5" stroke="#6a6a6a" stroke-width="1.100" fill="none"/></svg>
<div class="abs" style="left:137.500px;top:151px;width:626px;height:34.500px;border:1px solid #ebebeb;background:#fff"></div>
<svg class="abs" style="left:146.2px;top:161.2px;" width="15.5" height="13.5" viewBox="0 0 16 14"><defs><linearGradient id="gmon_2" x1="0" y1="0" x2="1" y2="1"><stop offset="0" stop-color="#34bde0"/><stop offset="1" stop-color="#1680be"/></linearGradient></defs>
<rect x=".5" y=".5" width="15" height="10" rx=".8" fill="url(#gmon_2)" stroke="#1c7aa6" stroke-width=".6"/><rect x="6.5" y="10.5" width="3" height="2" fill="#4b8fb5"/><rect x="4" y="12.3" width="8" height="1.3" rx=".5" fill="#6b7f8c"/></svg>
<svg class="abs" style="left:169.0px;top:164.5px;" width="5" height="8" viewBox="0 0 5 8"><path d="M1 .8L4.200 4 1 7.200" stroke="#555" stroke-width="1" fill="none"/></svg>
<div class="t" style="left:182.0px;top:160.3px;font-size:12.300px;color:#222;letter-spacing:-0.140px;">Этот компьютер</div>
<svg class="abs" style="left:704.0px;top:165.0px;" width="11" height="7" viewBox="0 0 11 7"><path d="M.8.800L5.500 5.600 10.200.800" stroke="#666" stroke-width="1.200" fill="none"/></svg>
<svg class="abs" style="left:737.0px;top:160.5px;" width="14" height="14" viewBox="0 0 14 14"><path d="M12.300 7A5.300 5.300 0 1 1 10.600 3.100" stroke="#777" stroke-width="1.100" fill="none"/><path d="M8 3.300h3V.3" stroke="#777" stroke-width="1.100" fill="none"/></svg>
<div class="abs" style="left:773px;top:151px;width:342.500px;height:34.500px;border:1px solid #ebebeb;background:#fff"></div>
<svg class="abs" style="left:787.0px;top:162.5px;" width="12" height="12" viewBox="0 0 12 12"><circle cx="7.300" cy="4.700" r="3.700" stroke="#999" stroke-width="1" fill="none"/><path d="M4.600 7.400L.8 11.200" stroke="#999" stroke-width="1"/></svg>
<div class="t" style="left:813.5px;top:160.6px;font-size:12.300px;color:#767676;letter-spacing:-0.136px;">Поиск: Этот компьютер</div>
<svg class="abs" style="left:5.3px;top:217.7px;" width="10" height="7" viewBox="0 0 10 7"><path d="M1 1L5 5.400 9 1" stroke="#3a3a3a" stroke-width="1.700" fill="none"/></svg>
<svg class="abs" style="left:22.8px;top:214.6px;" width="14.5" height="13.5" viewBox="0 0 15 14"><path d="M7.5.6l2.1 4.4 4.8.6-3.5 3.3.9 4.7-4.3-2.3-4.3 2.3.9-4.7L.6 5.6l4.8-.6z" fill="#f8c630" stroke="#f0b41c" stroke-width=".5" stroke-linejoin="round"/></svg>
<div class="nav" style="left:43.0px;top:213.3px;letter-spacing:-0.408px;">Быстрый доступ</div>
<svg class="abs" style="left:30.3px;top:239.5px;" width="16" height="13" viewBox="0 0 16 13"><defs><linearGradient id="gdesk_4" x1="0" y1="0" x2="1" y2="1"><stop offset="0" stop-color="#2fbde6"/><stop offset="1" stop-color="#1578ba"/></linearGradient></defs>
<rect x=".3" y=".5" width="15.4" height="12" rx="1" fill="url(#gdesk_4)"/><rect x="1.5" y="1.8" width="1.6" height="1.2" fill="#d9f4fc"/><rect x="1.5" y="4" width="1.6" height="1.2" fill="#bfeaf8" opacity=".8"/></svg>
<div class="nav" style="left:50.6px;top:238.3px;letter-spacing:-0.332px;">Desktop</div>
<svg class="abs" style="left:141.8px;top:240.2px;" width="11.5" height="11.5" viewBox="0 0 10 10"><path d="M6.200.6l3.200 3.200-1 .3-1.600 1.600.1 2.100-1.200.9-1.600-1.600-3 3-.4-.4 3-3-1.600-1.600.9-1.200 2.100.1L6 1.600z" fill="#a0a4a9"/></svg>
<svg class="abs" style="left:31.8px;top:264.1px;" width="13" height="15" viewBox="0 0 14 16"><path d="M7 1.5V11M3 7.5l4 4 4-4" stroke="#4fb697" stroke-width="1.300" fill="none" stroke-linecap="round" stroke-linejoin="round"/><path d="M2 14.3h10" stroke="#4fb697" stroke-width="1.400" stroke-linecap="round"/></svg>
<div class="nav" style="left:50.6px;top:263.9px;letter-spacing:-0.205px;">Downloads</div>
<svg class="abs" style="left:141.8px;top:265.8px;" width="11.5" height="11.5" viewBox="0 0 10 10"><path d="M6.200.6l3.200 3.200-1 .3-1.600 1.600.1 2.100-1.200.9-1.600-1.600-3 3-.4-.4 3-3-1.600-1.600.9-1.200 2.100.1L6 1.600z" fill="#a0a4a9"/></svg>
<svg class="abs" style="left:32.6px;top:289.6px;" width="11.5" height="15" viewBox="0 0 12 16"><defs><linearGradient id="gdoc_8" x1="0" y1="0" x2="1" y2="1"><stop offset="0" stop-color="#a9b9cb"/><stop offset="1" stop-color="#73869e"/></linearGradient></defs>
<rect x=".8" y=".8" width="10.4" height="14.4" rx="1.3" fill="url(#gdoc_8)"/><rect x="2.6" y="3.2" width="6.8" height="1.2" fill="#eef3f8"/><rect x="2.6" y="5.6" width="6.8" height="1.2" fill="#eef3f8"/><rect x="2.6" y="8" width="4.6" height="1.2" fill="#eef3f8"/></svg>
<div class="nav" style="left:50.6px;top:289.4px;letter-spacing:-0.356px;">Documents</div>
<svg class="abs" style="left:141.8px;top:291.3px;" width="11.5" height="11.5" viewBox="0 0 10 10"><path d="M6.200.6l3.200 3.200-1 .3-1.600 1.600.1 2.100-1.200.9-1.600-1.600-3 3-.4-.4 3-3-1.600-1.600.9-1.200 2.100.1L6 1.600z" fill="#a0a4a9"/></svg>
<svg class="abs" style="left:30.6px;top:315.4px;" width="15.5" height="15" viewBox="0 0 15 14"><rect x=".5" y=".5" width="14" height="13" rx="1" fill="#1d80c9"/><path d="M1 12.5l5-6 3.2 3.6 1.8-1.8 3 4.2z" fill="#e8f4ff"/><circle cx="10.8" cy="3.8" r="1.5" fill="#d7ecff"/></svg>
<div class="nav" style="left:50.6px;top:315.2px;letter-spacing:-0.603px;">Pictures</div>
<svg class="abs" style="left:141.8px;top:317.1px;" width="11.5" height="11.5" viewBox="0 0 10 10"><path d="M6.200.6l3.200 3.200-1 .3-1.600 1.600.1 2.100-1.200.9-1.600-1.600-3 3-.4-.4 3-3-1.600-1.600.9-1.200 2.100.1L6 1.600z" fill="#a0a4a9"/></svg>
<svg class="abs" style="left:30.3px;top:340.7px;" width="16" height="16" viewBox="0 0 15 15"><defs><linearGradient id="gmus_12" x1="0" y1="0" x2="1" y2="1"><stop offset="0" stop-color="#f0917a"/><stop offset="1" stop-color="#c85a66"/></linearGradient></defs>
<circle cx="7.5" cy="7.5" r="7" fill="url(#gmus_12)"/><path d="M8.2 3.2v6.2" stroke="#fff" stroke-width="1.2"/><ellipse cx="6.8" cy="9.8" rx="1.8" ry="1.4" fill="#fff"/><path d="M8.2 3.2c1.4.2 2.4 1 2.6 2.4-.8-.7-1.6-.9-2.6-.9z" fill="#fff"/></svg>
<div class="nav" style="left:50.6px;top:341.0px;letter-spacing:-0.545px;">Music</div>
<svg class="abs" style="left:31.3px;top:366.1px;" width="14" height="16.3" viewBox="0 0 13 16"><defs><linearGradient id="gvid_13" x1="0" y1="0" x2="1" y2="1"><stop offset="0" stop-color="#b86be0"/><stop offset="1" stop-color="#7b3fc4"/></linearGradient></defs>
<rect x=".8" y=".8" width="11.4" height="14.4" rx="1.4" fill="url(#gvid_13)"/><path d="M4.6 5l4.6 3-4.6 3z" fill="#fff"/><rect x="1.6" y="2.2" width="1.2" height="1.4" fill="#e8d2f7"/><rect x="1.6" y="12.4" width="1.2" height="1.4" fill="#e8d2f7"/><rect x="10.2" y="2.2" width="1.2" height="1.4" fill="#e8d2f7"/><rect x="10.2" y="12.4" width="1.2" height="1.4" fill="#e8d2f7"/></svg>
<div class="nav" style="left:50.6px;top:366.5px;letter-spacing:-0.398px;">Videos</div>
<svg class="abs" style="left:30.6px;top:393.1px;" width="15.5" height="12.5" viewBox="0 0 16 13"><path d="M.5 2.2c0-.7.5-1.2 1.2-1.2h3.9l1.6 1.6h7.1c.7 0 1.2.5 1.2 1.2V11c0 .7-.5 1.2-1.2 1.2H1.7c-.7 0-1.2-.5-1.2-1.2z" fill="#f2c84a"/><path d="M.5 4.4h15V11c0 .7-.5 1.2-1.2 1.2H1.7c-.7 0-1.2-.5-1.2-1.2z" fill="#fbdf7e"/></svg>
<div class="nav" style="left:50.6px;top:391.6px;letter-spacing:-0.202px;">Снимки экрана</div>
<svg class="abs" style="left:7.0px;top:427.5px;" width="6" height="8" viewBox="0 0 6 8"><path d="M1 .8L4.400 4 1 7.200" stroke="#8a8a8a" stroke-width="1.100" fill="none"/></svg>
<svg class="abs" style="left:21.2px;top:425.8px;" width="16.5" height="10.5" viewBox="0 0 17 11"><path d="M4.2 10.5h9.4c1.7 0 3-1.2 3-2.8 0-1.5-1.2-2.7-2.7-2.8C13.400 2.500 11.400.6 9 .6c-1.900 0-3.600 1.100-4.300 2.800C2.400 3.500.5 5.000.5 7.000c0 1.900 1.600 3.500 3.700 3.500z" fill="#1a78d6"/><path d="M4.2 10.5h9.400c1.700 0 3-1.200 3-2.800 0-.9-.4-1.700-1.100-2.200L5.500 9.300z" fill="#1466c0" opacity=".6"/></svg>
<div class="nav" style="left:42.3px;top:423.9px;letter-spacing:-0.369px;">OneDrive</div>
<div class="abs" style="left:0px;top:452px;width:155.500px;height:22px;background:#d9d9d9"></div>
<svg class="abs" style="left:7.0px;top:459.5px;" width="6" height="8" viewBox="0 0 6 8"><path d="M1 .8L4.400 4 1 7.200" stroke="#8a8a8a" stroke-width="1.100" fill="none"/></svg>
<svg class="abs" style="left:21.8px;top:456.2px;" width="15.5" height="13.5" viewBox="0 0 16 14"><defs><linearGradient id="gmon_16" x1="0" y1="0" x2="1" y2="1"><stop offset="0" stop-color="#34bde0"/><stop offset="1" stop-color="#1680be"/></linearGradient></defs>
<rect x=".5" y=".5" width="15" height="10" rx=".8" fill="url(#gmon_16)" stroke="#1c7aa6" stroke-width=".6"/><rect x="6.5" y="10.5" width="3" height="2" fill="#4b8fb5"/><rect x="4" y="12.3" width="8" height="1.3" rx=".5" fill="#6b7f8c"/></svg>
<div class="nav" style="left:42.3px;top:455.9px;letter-spacing:-0.140px;">Этот компьютер</div>
<svg class="abs" style="left:7.0px;top:491.5px;" width="6" height="8" viewBox="0 0 6 8"><path d="M1 .8L4.400 4 1 7.200" stroke="#8a8a8a" stroke-width="1.100" fill="none"/></svg>
<svg class="abs" style="left:21.2px;top:487.2px;" width="16.5" height="14.5" viewBox="0 0 17 15"><rect x="3.500" y="3.500" width="12.500" height="8.500" rx=".8" fill="#2aa9df"/><rect x="8.5" y="12" width="3" height="1.600" fill="#5f93b3"/><rect x="6.500" y="13.400" width="7" height="1.200" rx=".5" fill="#7b8b96"/><circle cx="3.800" cy="3.600" r="3.200" fill="#63c1b0"/><path d="M1 3.600h5.600M3.800.6v6" stroke="#e9fbf6" stroke-width=".7"/></svg>
<div class="nav" style="left:42.3px;top:487.9px;letter-spacing:-0.740px;">Сеть</div>
<svg class="abs" style="left:258.0px;top:195.7px;" width="8" height="5" viewBox="0 0 8 5"><path d="M.8 4.400L4 .8 7.200 4.400" stroke="#9a9a9a" stroke-width="1" fill="none"/></svg>
<div class="hd" style="left:189.5px;top:201.0px;letter-spacing:-0.418px;">Имя</div>
<div class="hd" style="left:345.5px;top:201.0px;letter-spacing:-0.333px;">Тип</div>
<div class="hd" style="left:570.0px;top:201.0px;letter-spacing:-0.017px;">Общий размер</div>
<div class="hd" style="left:714.0px;top:201.0px;letter-spacing:-0.066px;">Свободно</div>
<div class="csep" style="left:339px"></div>
<div class="csep" style="left:563px"></div>
<div class="csep" style="left:707px"></div>
<div class="csep" style="left:852px"></div>
<svg class="abs" style="left:167.0px;top:236.0px;" width="8" height="5" viewBox="0 0 8 5"><path d="M.8.800L4 4.200 7.200.800" stroke="#9a9a9a" stroke-width="1" fill="none"/></svg>
<div class="grp" style="left:180.8px;top:230.3px;letter-spacing:-0.405px;">Folders (6)</div>
<div class="gline" style="left:243px;top:238.5px;width:872px"></div>
<div class="abs" style="left:174.5px;top:383px;width:673.5px;height:27px;background:#e2f3fd"></div>
<svg class="abs" style="left:178.0px;top:258.5px;" width="16" height="13" viewBox="0 0 16 13"><defs><linearGradient id="gdesk_18" x1="0" y1="0" x2="1" y2="1"><stop offset="0" stop-color="#2fbde6"/><stop offset="1" stop-color="#1578ba"/></linearGradient></defs>
<rect x=".3" y=".5" width="15.4" height="12" rx="1" fill="url(#gdesk_18)"/><rect x="1.5" y="1.8" width="1.6" height="1.2" fill="#d9f4fc"/><rect x="1.5" y="4" width="1.6" height="1.2" fill="#bfeaf8" opacity=".8"/></svg>
<div class="nm" style="left:198.6px;top:257.8px;letter-spacing:-0.332px;">Desktop</div>
<div class="ty" style="left:345.5px;top:257.8px;letter-spacing:-0.203px;">Системная папка</div>
<svg class="abs" style="left:180.2px;top:290.3px;" width="11.5" height="15" viewBox="0 0 12 16"><defs><linearGradient id="gdoc_19" x1="0" y1="0" x2="1" y2="1"><stop offset="0" stop-color="#a9b9cb"/><stop offset="1" stop-color="#73869e"/></linearGradient></defs>
<rect x=".8" y=".8" width="10.4" height="14.4" rx="1.3" fill="url(#gdoc_19)"/><rect x="2.6" y="3.2" width="6.8" height="1.2" fill="#eef3f8"/><rect x="2.6" y="5.6" width="6.8" height="1.2" fill="#eef3f8"/><rect x="2.6" y="8" width="4.6" height="1.2" fill="#eef3f8"/></svg>
<div class="nm" style="left:198.6px;top:290.6px;letter-spacing:-0.356px;">Documents</div>
<div class="ty" style="left:345.5px;top:290.6px;letter-spacing:-0.203px;">Системная папка</div>
<svg class="abs" style="left:179.5px;top:323.4px;" width="13" height="15" viewBox="0 0 14 16"><path d="M7 1.5V11M3 7.5l4 4 4-4" stroke="#4fb697" stroke-width="1.300" fill="none" stroke-linecap="round" stroke-linejoin="round"/><path d="M2 14.3h10" stroke="#4fb697" stroke-width="1.400" stroke-linecap="round"/></svg>
<div class="nm" style="left:198.6px;top:323.7px;letter-spacing:-0.205px;">Downloads</div>
<div class="ty" style="left:345.5px;top:323.7px;letter-spacing:-0.203px;">Системная папка</div>
<svg class="abs" style="left:178.0px;top:355.0px;" width="16" height="16" viewBox="0 0 15 15"><defs><linearGradient id="gmus_21" x1="0" y1="0" x2="1" y2="1"><stop offset="0" stop-color="#f0917a"/><stop offset="1" stop-color="#c85a66"/></linearGradient></defs>
<circle cx="7.5" cy="7.5" r="7" fill="url(#gmus_21)"/><path d="M8.2 3.2v6.2" stroke="#fff" stroke-width="1.2"/><ellipse cx="6.8" cy="9.8" rx="1.8" ry="1.4" fill="#fff"/><path d="M8.2 3.2c1.4.2 2.4 1 2.6 2.4-.8-.7-1.6-.9-2.6-.9z" fill="#fff"/></svg>
<div class="nm" style="left:198.6px;top:355.8px;letter-spacing:-0.545px;">Music</div>
<div class="ty" style="left:345.5px;top:355.8px;letter-spacing:-0.203px;">Системная папка</div>
<svg class="abs" style="left:178.2px;top:388.6px;" width="15.5" height="15" viewBox="0 0 15 14"><rect x=".5" y=".5" width="14" height="13" rx="1" fill="#1d80c9"/><path d="M1 12.5l5-6 3.2 3.6 1.8-1.8 3 4.2z" fill="#e8f4ff"/><circle cx="10.8" cy="3.8" r="1.5" fill="#d7ecff"/></svg>
<div class="nm" style="left:198.6px;top:388.9px;letter-spacing:-0.603px;">Pictures</div>
<div class="ty" style="left:345.5px;top:388.9px;letter-spacing:-0.203px;">Системная папка</div>
<svg class="abs" style="left:179.0px;top:420.8px;" width="14" height="16.3" viewBox="0 0 13 16"><defs><linearGradient id="gvid_23" x1="0" y1="0" x2="1" y2="1"><stop offset="0" stop-color="#b86be0"/><stop offset="1" stop-color="#7b3fc4"/></linearGradient></defs>
<rect x=".8" y=".8" width="11.4" height="14.4" rx="1.4" fill="url(#gvid_23)"/><path d="M4.6 5l4.6 3-4.6 3z" fill="#fff"/><rect x="1.6" y="2.2" width="1.2" height="1.4" fill="#e8d2f7"/><rect x="1.6" y="12.4" width="1.2" height="1.4" fill="#e8d2f7"/><rect x="10.2" y="2.2" width="1.2" height="1.4" fill="#e8d2f7"/><rect x="10.2" y="12.4" width="1.2" height="1.4" fill="#e8d2f7"/></svg>
<div class="nm" style="left:198.6px;top:421.7px;letter-spacing:-0.398px;">Videos</div>
<div class="ty" style="left:345.5px;top:421.7px;letter-spacing:-0.203px;">Системная папка</div>
<svg class="abs" style="left:167.0px;top:455.0px;" width="8" height="5" viewBox="0 0 8 5"><path d="M.8.800L4 4.200 7.200.800" stroke="#9a9a9a" stroke-width="1" fill="none"/></svg>
<div class="grp" style="left:180.8px;top:449.3px;letter-spacing:-0.347px;">Devices and drives (3)</div>
<div class="gline" style="left:303px;top:457.5px;width:812px"></div>
<svg class="abs" style="left:178.0px;top:477.8px;" width="16" height="12" viewBox="0 0 16 12"><rect x=".5" y="7" width="15" height="4.200" rx=".6" fill="#2b2f33"/><rect x="1" y="6" width="14" height="1.300" fill="#c9cdd1"/><rect x="12.500" y="8.600" width="1.800" height="1" fill="#7fe08c"/><rect x="1" y="0.300" width="2" height="2" fill="#2a8be6"/><rect x="3.500" y=".3" width="2" height="2" fill="#2a8be6"/><rect x="1" y="2.800" width="2" height="2" fill="#2a8be6"/><rect x="3.500" y="2.800" width="2" height="2" fill="#2a8be6"/></svg>
<div class="nm" style="left:198.6px;top:477.3px;letter-spacing:-0.262px;">Локальный диск (C:)</div>
<div class="ty" style="left:345.5px;top:477.3px;letter-spacing:-0.119px;">Локальный диск</div>
<div class="ty" style="left:500.5px;width:200px;text-align:right;top:477.3px;letter-spacing:-0.534px;">237 GB</div>
<div class="ty" style="left:644.5px;width:200px;text-align:right;top:477.3px;letter-spacing:-0.534px;">207 GB</div>
<svg class="abs" style="left:178.0px;top:511.8px;" width="16" height="12" viewBox="0 0 16 12"><rect x=".5" y="5" width="15" height="4.600" rx=".6" fill="#2b2f33"/><rect x="1" y="4" width="14" height="1.300" fill="#c9cdd1"/><rect x="12.500" y="6.800" width="1.800" height="1" fill="#7fe08c"/></svg>
<div class="nm" style="left:198.6px;top:509.8px;letter-spacing:-0.193px;">Локальный диск (D:)</div>
<div class="ty" style="left:345.5px;top:509.8px;letter-spacing:-0.119px;">Локальный диск</div>
<div class="ty" style="left:500.5px;width:200px;text-align:right;top:509.8px;letter-spacing:-0.478px;">1,81 TB</div>
<div class="ty" style="left:644.5px;width:200px;text-align:right;top:509.8px;letter-spacing:-0.617px;">171 GB</div>
<svg class="abs" style="left:178.0px;top:542.1px;" width="16" height="15" viewBox="0 0 16 15"><circle cx="11.500" cy="4" r="3.200" fill="#dfe3e7" stroke="#aeb4ba" stroke-width=".5"/><circle cx="11.500" cy="4" r="1" fill="#9aa0a6"/><rect x=".5" y="6.500" width="15" height="4.500" rx=".6" fill="#2b2f33"/><rect x="1" y="5.600" width="14" height="1.200" fill="#c9cdd1"/><rect x="3" y="11" width="10" height="3.200" fill="#3a3e42"/><rect x="4.500" y="12.200" width="7" height="1" fill="#dfe3e7"/></svg>
<div class="nm" style="left:198.6px;top:542.6px;letter-spacing:-0.415px;">DVD RW дисковод (F:)</div>
<div class="ty" style="left:345.5px;top:542.6px;letter-spacing:-0.259px;">CD-дисковод</div>
<div class="nav" style="left:13.5px;top:572.8px;color:#444;letter-spacing:-0.306px;">9 items</div>
<div class="abs" style="left:1075.5px;top:568.5px;width:22.200px;height:24px;background:#d9eef8;border:1px solid #a4c4d2"></div>
<svg class="abs" style="left:1081.5px;top:576.3px;" width="11" height="10" viewBox="0 0 11 10"><path d="M0 .5h11M0 3.500h11M0 6.500h11M0 9.500h11" stroke="#444" stroke-width="1"/></svg>
<svg class="abs" style="left:1102.5px;top:574.4px;" width="13" height="12.5" viewBox="0 0 13 12.5"><rect x=".8" y=".8" width="11.400" height="9.200" fill="#fff" stroke="#505050" stroke-width="1.200"/><path d="M1.500 11.600h10.500" stroke="#9a9a9a" stroke-width="1"/></svg>

</div></div>
<div id="task">
<div class="abs" style="left:794px;top:5px;width:38px;height:38px;border-radius:4px;background:#eef2fa"></div>
<svg class="abs" style="left:625.5px;top:13.4px;" width="23" height="22.5" viewBox="0 0 23 22.5"><defs><linearGradient id="ws" x1="0" y1="0" x2="1" y2="1"><stop offset="0" stop-color="#55c8f2"/><stop offset="1" stop-color="#1479d0"/></linearGradient></defs>
<rect x="0" y="0" width="10.900" height="10.700" fill="url(#ws)"/><rect x="12.100" y="0" width="10.900" height="10.700" fill="url(#ws)"/><rect x="0" y="11.800" width="10.900" height="10.700" fill="#1d88d8"/><rect x="12.100" y="11.800" width="10.900" height="10.700" fill="#1479d0"/></svg>
<svg class="abs" style="left:668.5px;top:13.0px;" width="24" height="24" viewBox="0 0 24 24"><circle cx="14" cy="9.800" r="7.600" stroke="#20242a" stroke-width="2.300" fill="none"/><path d="M8.600 15.400L2.400 21.600" stroke="#20242a" stroke-width="2.800" stroke-linecap="round"/></svg>
<svg class="abs" style="left:712.5px;top:13.3px;" width="24" height="22" viewBox="0 0 24 22"><defs><linearGradient id="tv" x1="0" y1="0" x2="1" y2="1"><stop offset="0" stop-color="#ffffff"/><stop offset="1" stop-color="#b9bcc0"/></linearGradient></defs>
<rect x="0.500" y="6" width="17.500" height="15.500" rx="1" fill="#23262b"/><rect x="6.500" y=".5" width="17" height="15.500" rx="1" fill="url(#tv)"/></svg>
<svg class="abs" style="left:756.5px;top:13.0px;" width="24.5" height="22" viewBox="0 0 24.5 22"><defs><linearGradient id="wg" x1="0" y1="0" x2="1" y2="0"><stop offset="0" stop-color="#ffffff"/><stop offset="1" stop-color="#b4b8bd"/></linearGradient></defs>
<rect x=".3" y=".3" width="23.900" height="21.400" rx="1.800" fill="#1e2835"/><rect x="2" y="2" width="9" height="18" fill="url(#wg)"/><rect x="13" y="2" width="9.500" height="8.500" fill="#45c3dc"/><rect x="13" y="12" width="9.500" height="3" fill="#1c93c4"/><rect x="13" y="16.500" width="9.500" height="3.500" fill="#1577ae"/></svg>
<svg class="abs" style="left:800.0px;top:11.9px;" width="25" height="25" viewBox="0 0 25 25"><defs><linearGradient id="ex" x1="0" y1="0" x2="0" y2="1"><stop offset="0" stop-color="#ffd65a"/><stop offset="1" stop-color="#f7bd2c"/></linearGradient></defs>
<path d="M.5 3.500c0-1 .8-1.800 1.800-1.800h6.500l2.200 2.600H22.700c1 0 1.800.8 1.800 1.800V20H.5z" fill="#e8a325"/><path d="M.5 6.500h24V20H.5z" fill="url(#ex)"/><path d="M5 24.500v-6.200c0-1.300 1-2.300 2.300-2.300h10.400c1.300 0 2.300 1 2.300 2.300v6.200z" fill="#1667b3"/><path d="M.5 20H5v3H1.800c-.7 0-1.300-.6-1.300-1.300zM20 20h4.500v1.700c0 .7-.6 1.300-1.300 1.300H20z" fill="#f7bd2c"/><rect x="8" y="19.200" width="9" height="1.600" fill="#0f4e8c"/></svg>
<div class="abs" style="left:805px;top:40px;width:15.500px;height:2.800px;border-radius:1.400px;background:#1667b3"></div>
<svg class="abs" style="left:844.5px;top:12.0px;" width="25" height="25" viewBox="0 0 256 256"><defs>
<linearGradient id="ea_t" x1="63.300" y1="182" x2="241.700" y2="182" gradientUnits="userSpaceOnUse"><stop offset="0" stop-color="#1265b8"/><stop offset="1" stop-color="#114f98"/></linearGradient>
<linearGradient id="ec_t" x1="157.300" y1="104.600" x2="46" y2="225.900" gradientUnits="userSpaceOnUse"><stop offset="0" stop-color="#1b9de2"/><stop offset=".2" stop-color="#1595df"/><stop offset=".7" stop-color="#0a82d8"/><stop offset="1" stop-color="#077ad4"/></linearGradient>
<linearGradient id="ee_t" x1="0" y1="60" x2="256" y2="110" gradientUnits="userSpaceOnUse"><stop offset="0" stop-color="#1e93d8"/><stop offset=".4" stop-color="#2bb9da"/><stop offset=".72" stop-color="#45d19a"/><stop offset="1" stop-color="#6ae665"/></linearGradient>
</defs>
<path fill="url(#ea_t)" d="M235.700 195.500a93.700 93.700 0 0 1-10.600 4.700 101.900 101.900 0 0 1-35.900 6.400c-47.300 0-88.500-32.500-88.500-74.300a31.500 31.500 0 0 1 16.400-27.300c-42.800 1.800-53.800 46.400-53.800 72.500 0 73.900 68.100 81.400 82.800 81.400 7.900 0 19.800-2.300 27-4.600l1.300-.4a128.300 128.300 0 0 0 66.600-52.800 4 4 0 0 0-5.300-5.600z"/>
<path fill="url(#ec_t)" d="M105.700 241.400a79.200 79.200 0 0 1-22.700-21.300 80.700 80.700 0 0 1 29.500-120c3.200-1.500 8.500-4.100 15.600-4a32.400 32.400 0 0 1 25.700 13 31.900 31.900 0 0 1 6.300 18.700c0-.2 24.500-79.600-80-79.600-43.900 0-80 41.600-80 78.200a130.200 130.200 0 0 0 12.100 56 128 128 0 0 0 156.400 67.100 75.500 75.500 0 0 1-62.800-8z"/>
<path fill="url(#ee_t)" d="M152.300 148.900c-.8 1-3.300 2.500-3.300 5.600 0 2.600 1.700 5.200 4.800 7.300 14.300 10 41.400 8.600 41.500 8.600a59.600 59.600 0 0 0 30.300-8.300 61.400 61.400 0 0 0 30.400-52.900c.3-22.400-8-37.300-11.300-43.900C223.500 23.900 178.100 0 128 0A128 128 0 0 0 0 126.200c.5-36.500 36.800-66 80-66 3.500 0 23.500.3 42 10 16.300 8.600 24.900 19 30.800 29.200 6.200 10.700 7.300 24.100 7.300 29.500s-2.700 13.300-7.800 20z"/></svg>
<svg class="abs" style="left:888.5px;top:11.5px;" width="24" height="25" viewBox="0 0 24 25"><path d="M6.500 7V4.500C6.500 2.300 8.300.8 10.500.8h3c2.200 0 4 1.500 4 3.700V7" stroke="#2a3038" stroke-width="2" fill="none"/><rect x=".5" y="6.500" width="23" height="18" rx="1.200" fill="#2a3038"/><rect x="7.500" y="12" width="4" height="3.700" fill="#e0643c"/><rect x="12.300" y="12" width="4" height="3.700" fill="#84b840"/><rect x="7.500" y="16.400" width="4" height="3.700" fill="#3a9fe0"/><rect x="12.300" y="16.400" width="4" height="3.700" fill="#f2c230"/></svg>
<svg class="abs" style="left:1311.7px;top:20.5px;" width="14" height="8" viewBox="0 0 14 8"><path d="M1 7l6-5.800L13 7" stroke="#2a2a2a" stroke-width="1.500" fill="none"/></svg>
<svg class="abs" style="left:1334.2px;top:17.0px;" width="17" height="14" viewBox="0 0 17 14"><rect x="3.500" y="1" width="12.500" height="8.800" fill="none" stroke="#2a2a2a" stroke-width="1.100"/><path d="M9.700 10v2.300M6.500 12.600h6.500" stroke="#2a2a2a" stroke-width="1.100"/><rect x=".8" y=".3" width="3.400" height="3" fill="#e4ecf7" stroke="#2a2a2a" stroke-width=".9"/><path d="M2.500 3.300V9.500" stroke="#2a2a2a" stroke-width=".9"/></svg>
<svg class="abs" style="left:1358.0px;top:17.7px;" width="16" height="13" viewBox="0 0 16 13"><path d="M1 4.500h2.600L7 1.300v10.400L3.600 8.500H1z" stroke="#2a2a2a" stroke-width="1.100" fill="none" stroke-linejoin="round"/><path d="M9.300 4.300c.9 1.200.9 3.200 0 4.400" stroke="#2a2a2a" stroke-width="1" fill="none"/><path d="M11.500 2.600c1.700 2.200 1.700 5.600 0 7.800" stroke="#9a9a9a" stroke-width="1" fill="none"/><path d="M13.700 1c2.300 3 2.300 8 0 11" stroke="#c4c4c4" stroke-width="1" fill="none"/></svg>
<div class="tray" style="left:1346.0px;width:100px;text-align:center;top:16.3px;letter-spacing:-0.800px;">РУС</div>
<div class="tray" style="left:1398.2px;width:100px;text-align:center;top:8.0px;letter-spacing:-0.606px;">23:40</div>
<div class="tray" style="left:1398.7px;width:100px;text-align:center;top:24.7px;letter-spacing:-0.606px;">20.06.2021</div>
<svg class="abs" style="left:1495.0px;top:16.0px;" width="16" height="14" viewBox="0 0 16 14"><path d="M.5.500h15v10.500H5L2 13.500V11H.5z" fill="#16181b"/><path d="M3 3.500h10M3 6h10M3 8.500h6" stroke="#e4ecf7" stroke-width=".9"/></svg>
<div class="abs" style="left:1504px;top:25.500px;width:13.500px;height:13.500px;border-radius:50%;background:#dfe5ee;border:1px solid #9aa3ad"></div>
<div class="tray" style="left:1460.8px;width:100px;text-align:center;top:24.3px;font-size:10.500px;font-weight:bold;">3</div>
<div class="abs" style="left:1530.500px;top:8px;width:1px;height:32px;background:#c8d2df"></div>

</div>
</body>
</html>
